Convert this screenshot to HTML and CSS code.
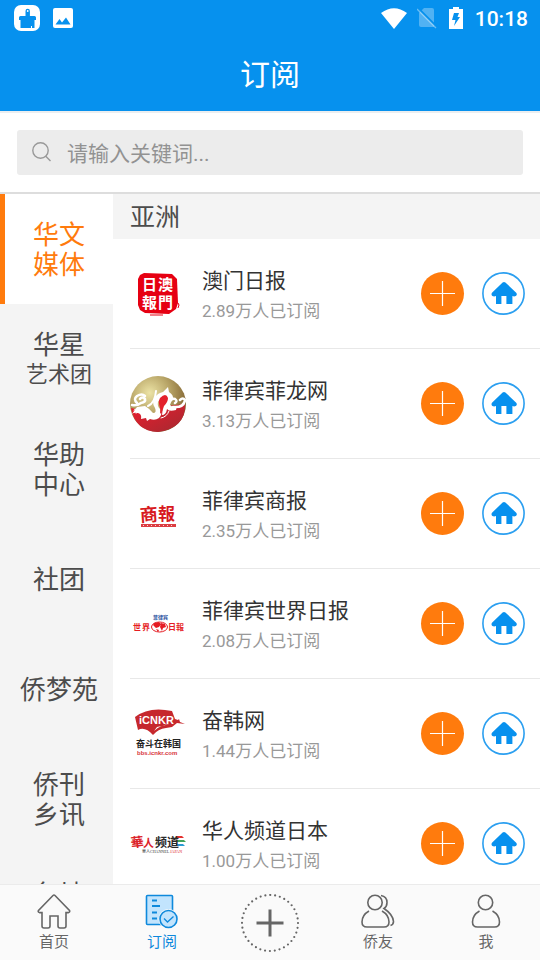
FILE: index.html
```html
<!DOCTYPE html>
<html lang="zh-CN">
<head>
    <meta charset="utf-8">
    <meta name="viewport" content="width=device-width, initial-scale=1">
    <title>订阅</title>
    <link rel="stylesheet" href="styles.css">
</head>
<body>
    <!-- Shared icons -->
    <svg class="icon-defs" aria-hidden="true">
        <symbol id="icon-plus" viewBox="0 0 43 43">
            <path d="M21.5 9v25M9 21.5h25" stroke="#fff" stroke-width="1.2" fill="none"/>
        </symbol>
        <symbol id="icon-house" viewBox="0 0 43 43">
            <circle cx="21.5" cy="21.5" r="20.6" fill="#fff" stroke="#2b9ff0" stroke-width="1.6"/>
            <path d="M20.6 10.400q1.400-1 2.800 0L34.200 20.800q1.400 2-.4 3.200-1.600.9-3.400 0V32h-6V24h-5v8h-5.400v-8q-2 .9-3.600 0-1.600-1.400-.4-3.200z" fill="#0891ee"/>
        </symbol>
    </svg>

    <header class="header">
        <div class="status-bar">
            <svg width="26" height="26" viewBox="0 0 26 26">
                <rect width="26" height="26" rx="7" fill="#fff"/>
                <path d="M11.500 11V6a2.200 2.200 0 0 1 4.400 0v5h4.600q1.500 0 1.500 1.500V15h-1.500v8H6.500v-8H5v-2.500Q5 11 6.500 11z" fill="#0691ee"/>
                <circle cx="13.700" cy="6" r=".9" fill="#fff"/>
                <path d="M17.500 21v2" stroke="#fff"/>
            </svg>
            <svg class="photo-icon" width="20" height="20" viewBox="0 0 20 20">
                <rect width="20" height="20" rx="2" fill="#fff"/>
                <path d="M2.500 16.500l4-5.500 2.500 3.500 4-5 4.500 7z" fill="#0691ee"/>
            </svg>
            <svg class="wifi-icon" width="26" height="21" viewBox="0 0 26 21">
                <path d="M0 5Q13-4.500 26 5L13 21z" fill="#fff"/>
            </svg>
            <svg width="20" height="22" viewBox="0 0 20 22">
                <path d="M7 1h8q2 0 2 2v17H4q-2 0-2-2V6z" fill="#fff" opacity=".3"/>
                <path d="M1 1l18 18" stroke="#0691ee" stroke-width="2"/>
                <path d="M0 2l19 19" stroke="#fff" stroke-width="1.300" opacity=".4"/>
            </svg>
            <svg width="14" height="22" viewBox="0 0 14 22">
                <path d="M0 2h4V0h6v2h4v20H0z" fill="#fff"/>
                <path d="M5 6h5L8.500 10H11l-6 9 1.500-6H3z" fill="#0691ee"/>
            </svg>
            <span class="clock">10:18</span>
        </div>
        <h1 class="title">订阅</h1>
    </header>

    <form class="search">
        <label class="search-box">
            <svg width="20" height="22" viewBox="0 0 20 22" fill="none" stroke="#999" stroke-width="1.400">
                <circle cx="8.500" cy="8.500" r="7.700"/>
                <path d="M13.500 14l5 5"/>
            </svg>
            <input class="search-input" type="text" placeholder="请输入关键词..." aria-label="搜索">
        </label>
    </form>

    <main class="content">
        <nav class="categories">
            <a class="category active" href="#"><span>华文</span><span>媒体</span></a>
            <a class="category" href="#"><span>华星</span><span class="small">艺术团</span></a>
            <a class="category" href="#"><span>华助</span><span>中心</span></a>
            <a class="category" href="#"><span>社团</span></a>
            <a class="category" href="#"><span>侨梦苑</span></a>
            <a class="category" href="#"><span>侨刊</span><span>乡讯</span></a>
            <a class="category" href="#"><span>各地</span><span>侨联</span></a>
        </nav>

        <section class="media">
            <h2 class="region">亚洲</h2>
            <ul class="media-list">
                <li class="media-item">
                    <svg class="logo" viewBox="0 0 56 56">
                        <path d="M8 13l2-4 4-2 28 1 5 5 1 24-2 6-7 5-24-1-5-3-2-5z" fill="#e60012"/>
                        <path d="M48 37l1 2-1 3M20 49h13" stroke="#e60012" fill="none"/>
                        <g class="brush" font-size="15" fill="#fff">
                            <text x="12" y="24">日</text>
                            <text x="28" y="24">澳</text>
                            <text x="12" y="42">報</text>
                            <text x="28" y="42">門</text>
                        </g>
                    </svg>
                    <div class="info">
                        <h3 class="name">澳门日报</h3>
                        <p class="count">2.89万人已订阅</p>
                    </div>
                    <button class="round-button add" type="button" aria-label="订阅"><svg><use href="#icon-plus"/></svg></button>
                    <a class="round-button" href="#" aria-label="主页"><svg><use href="#icon-house"/></svg></a>
                </li>
                <li class="media-item">
                    <svg class="logo" viewBox="0 0 56 56">
                        <defs>
                            <radialGradient id="gold" cx=".35" cy=".3" r=".7">
                                <stop offset="0" stop-color="#ece3a5"/>
                                <stop offset=".5" stop-color="#b9a668"/>
                                <stop offset="1" stop-color="#80622f"/>
                            </radialGradient>
                            <linearGradient id="ruby" x2="1" y2="1">
                                <stop offset="0" stop-color="#ed1c2e"/>
                                <stop offset="1" stop-color="#a32a31"/>
                            </linearGradient>
                        </defs>
                        <circle cx="28" cy="28" r="28" fill="url(#gold)"/>
                        <path d="M1 32q7 2 12 0l12 9 12-11 18-2q1 24-27 28Q5 55 1 32z" fill="url(#ruby)"/>
                        <!-- dragon body -->
                        <path d="M38 11l1 5q5 3 4 8-4-1-4 4 3 4 8 2l-1 4q-7 2-9-1-1 6-5 6 1-7 0-11-2-6-4-2-1 4 2 7 3 5-1 9-4 3-9 1l-3 2-1-3-5 1q1-5-3-6-4-1-6 1l5-7 8-1q5 3 8 7 4 0 2-5-4-6 0-11 3-4 8-5z" fill="#fff"/>
                        <path d="M30 22q6-6 8 0 0 4-4 8-1 5-4 8 1-5-1-10-1-3 1-6z" fill="#e3212c"/>
                        <!-- clouds -->
                        <g fill="none" stroke="#fff" stroke-linecap="round">
                            <path d="M2 29q5 1 9-2 5-1 4-4-3-3-5 0M7 27q-4-4 0-7 5-3 8 0" stroke-width="2.500"/>
                            <path d="M18 30q7-3 8-15" stroke-width="2"/>
                            <path d="M39 28q2-6 6-5 3 2 0 4M43 31q11 1 12-7-2-3-5 0" stroke-width="2.500"/>
                            <path d="M4 34q2-2 5-1M6 37q3-2 5-1M31 42q6-1 8-7"/>
                        </g>
                    </svg>
                    <div class="info">
                        <h3 class="name">菲律宾菲龙网</h3>
                        <p class="count">3.13万人已订阅</p>
                    </div>
                    <button class="round-button add" type="button" aria-label="订阅"><svg><use href="#icon-plus"/></svg></button>
                    <a class="round-button" href="#" aria-label="主页"><svg><use href="#icon-house"/></svg></a>
                </li>
                <li class="media-item">
                    <svg class="logo" viewBox="0 0 56 56">
                        <g class="brush" fill="#d71920">
                            <text x="10" y="35" font-size="18" transform="rotate(-4 20 30)">商</text>
                            <text x="28" y="34" font-size="17">報</text>
                        </g>
                        <path d="M11 38h35v3H11z" fill="#dc3d42"/>
                        <path d="M13 39.500h32" stroke="#f8d6d6" stroke-dasharray="1 3"/>
                    </svg>
                    <div class="info">
                        <h3 class="name">菲律宾商报</h3>
                        <p class="count">2.35万人已订阅</p>
                    </div>
                    <button class="round-button add" type="button" aria-label="订阅"><svg><use href="#icon-plus"/></svg></button>
                    <a class="round-button" href="#" aria-label="主页"><svg><use href="#icon-house"/></svg></a>
                </li>
                <li class="media-item">
                    <svg class="logo" viewBox="0 0 56 56">
                        <g class="brush" fill="#e51c23">
                            <text x="3" y="34" font-size="8">世</text>
                            <text x="12" y="34" font-size="8">界</text>
                            <text x="38" y="34" font-size="8">日</text>
                            <text x="46" y="34" font-size="8">報</text>
                            <text x="23" y="23" font-size="5" fill="#244b9b">菲律宾</text>
                        </g>
                        <ellipse cx="29.500" cy="31" rx="8" ry="5" fill="#fff" stroke="#e51c23"/>
                        <path d="M24 27l5-1 2 2-2 3-3 1-3-3zM31 27l4 1 1 3-3 1-1 3-2-4zM26 33l3 1-1 2z" fill="#e51c23"/>
                    </svg>
                    <div class="info">
                        <h3 class="name">菲律宾世界日报</h3>
                        <p class="count">2.08万人已订阅</p>
                    </div>
                    <button class="round-button add" type="button" aria-label="订阅"><svg><use href="#icon-plus"/></svg></button>
                    <a class="round-button" href="#" aria-label="主页"><svg><use href="#icon-house"/></svg></a>
                </li>
                <li class="media-item">
                    <svg class="logo" viewBox="0 0 56 56">
                        <path d="M5 11q14-11 37-6l3 8 3 1 1-1 1 3 5 2-8-1-5 4-6 1q-8 1-13 7Q15 20 8 24z" fill="#c6282d"/>
                        <path d="M24 25q6-6 16-7l-13 3z" fill="#fff"/>
                        <text class="sans" x="9" y="18" font-size="11" fill="#fff">iCNKR</text>
                        <text class="brush" x="6" y="41" font-size="9" fill="#222">奋斗在韩国</text>
                        <text class="sans" x="7" y="49" font-size="6" fill="#d7353c">bbs.icnkr.com</text>
                    </svg>
                    <div class="info">
                        <h3 class="name">奋韩网</h3>
                        <p class="count">1.44万人已订阅</p>
                    </div>
                    <button class="round-button add" type="button" aria-label="订阅"><svg><use href="#icon-plus"/></svg></button>
                    <a class="round-button" href="#" aria-label="主页"><svg><use href="#icon-house"/></svg></a>
                </li>
                <li class="media-item">
                    <svg class="logo" viewBox="0 0 56 56">
                        <path d="M46 20h6l2 2h-8z" fill="#e4312f"/>
                        <path d="M47 24h7l2 2h-9z" fill="#41a35a"/>
                        <path d="M46 28h7l2 2h-9z" fill="#2a9bd2"/>
                        <g class="brush">
                            <text x="1" y="31" font-size="13" fill="#dc2229" transform="rotate(-6 6 28)">華</text>
                            <text x="13" y="31" font-size="11" fill="#dc2229">人</text>
                            <text x="25" y="31" font-size="12" fill="#292929">频道</text>
                        </g>
                        <text class="serif" x="12" y="37" font-size="4" fill="#333">華人CHANNEL <tspan fill="#dc2229">JAPAN</tspan></text>
                    </svg>
                    <div class="info">
                        <h3 class="name">华人频道日本</h3>
                        <p class="count">1.00万人已订阅</p>
                    </div>
                    <button class="round-button add" type="button" aria-label="订阅"><svg><use href="#icon-plus"/></svg></button>
                    <a class="round-button" href="#" aria-label="主页"><svg><use href="#icon-house"/></svg></a>
                </li>
            </ul>
        </section>
    </main>

    <nav class="tab-bar">
        <a class="tab" href="#">
            <svg width="34" height="36" viewBox="0 0 34 36">
                <path d="M16 1.500q1-1 2 0L32.500 16.500q.8 1.500-1 2.100H29V32q0 2-2 2h-4q-2 0-2-2V22h-8v10q0 2-2 2H7q-2 0-2-2V18.600H2.500q-2-.6-1-2.100z"/>
            </svg>
            首页
        </a>
        <a class="tab active" href="#">
            <svg width="34" height="36" viewBox="0 0 34 36">
                <rect x="1.500" y="1.500" width="26" height="29" rx="1" fill="#c2e4fd"/>
                <path d="M7 6.500h5M7 12h8M7 18.500h5M7 24.500h5" stroke-width="2"/>
                <circle cx="23.500" cy="25" r="10" fill="#fafafa" stroke="none"/>
                <circle cx="23.500" cy="25" r="8.500" fill="#c2e4fd"/>
                <path d="M19 24.500l3.500 3.500 6-5.500" stroke-width="1.300"/>
            </svg>
            订阅
        </a>
        <button class="tab" type="button" aria-label="发布">
            <svg width="60" height="60" viewBox="0 0 60 60">
                <circle cx="30" cy="29" r="28" stroke-width="2.200" stroke-linecap="round" stroke-dasharray="0 4.888"/>
                <path d="M30 15.500v27M16.500 29h27" stroke-width="3"/>
            </svg>
        </button>
        <a class="tab" href="#">
            <svg width="34" height="36" viewBox="0 0 34 36">
                <circle cx="14" cy="8.500" r="7.200"/>
                <path d="M8 17Q1 21 1 28q0 5 5 5h17q5 0 5-5 0-7-7-11M20 1.500q6 1 6 7 0 4-3 6 9 6 9.500 13 0 3-3 4"/>
            </svg>
            侨友
        </a>
        <a class="tab" href="#">
            <svg width="34" height="36" viewBox="0 0 34 36">
                <circle cx="16.500" cy="8.500" r="7.200"/>
                <path d="M10.500 17Q3.500 21 3.500 28q0 5 5 5h17q5 0 5-5 0-7-7-11"/>
            </svg>
            我
        </a>
    </nav>
</body>
</html>
```
FILE: styles.css
```css
* {
    box-sizing: border-box;
}

body {
    display: flex;
    flex-direction: column;
    height: 100vh;
    margin: 0;
    background-color: #fff;
    color: #333;
    font-family: Roboto, "Noto Sans CJK SC", sans-serif;
}

h1, h2, h3, p, ul {
    margin: 0;
    padding: 0;
    font-weight: normal;
}

a {
    color: inherit;
    text-decoration: none;
}

svg {
    display: block;
    flex-shrink: 0;
}

.icon-defs {
    position: absolute;
    width: 0;
    height: 0;
}

/* Header */
.header {
    flex-shrink: 0;
    background-color: #0691ee;
    border-bottom: 2px solid #ebeef0;
    color: #fff;
}

.status-bar {
    display: flex;
    align-items: center;
    gap: 12px;
    height: 36px;
    padding: 0 12px 0 14px;
}

.photo-icon {
    margin-left: 1px;
}

.wifi-icon {
    margin-left: auto;
    margin-right: -2px;
}

.clock {
    padding-top: 2px;
    font-size: 21px;
    font-weight: 500;
}

.title {
    height: 75px;
    font-size: 30px;
    line-height: 78px;
    text-align: center;
}

/* Search */
.search {
    flex-shrink: 0;
    padding: 17px;
    border-bottom: 2px solid #ddd;
}

.search-box {
    display: flex;
    align-items: center;
    gap: 15px;
    height: 45px;
    padding: 0 15px;
    border-radius: 3px;
    background-color: #ececec;
}

.search-input {
    flex: 1;
    min-width: 0;
    padding: 2px 0 0;
    border: none;
    outline: none;
    background: none;
    color: #333;
    font-family: inherit;
    font-size: 21px;
}

.search-input::placeholder {
    color: #929292;
}

/* Categories on the left, list on the right */
.content {
    display: flex;
    flex: 1;
    min-height: 0;
}

.categories,
.media {
    overflow-y: auto;
    scrollbar-width: none;
}

.categories {
    flex: 0 0 113px;
    background-color: #f4f4f4;
}

.category {
    display: flex;
    flex-direction: column;
    align-items: center;
    justify-content: center;
    height: 110px;
    padding-top: 2px;
    border-left: 5px solid transparent;
    color: #4c4c4c;
    font-size: 26px;
    line-height: 30px;
}

.category .small {
    font-size: 22px;
}

.category.active {
    border-left-color: #ff7b0d;
    background-color: #fff;
    color: #ff7b0d;
}

.media {
    flex: 1;
    min-width: 0;
}

.region {
    padding: 2px 0 0 17px;
    background-color: #f4f4f4;
    color: #4c4c4c;
    font-size: 25px;
    line-height: 43px;
}

.media-list {
    list-style: none;
}

.media-item {
    display: flex;
    align-items: center;
    height: 110px;
    margin-left: 17px;
    padding-right: 15px;
    border-bottom: 1px solid #e8e8e8;
}

.logo {
    width: 56px;
    height: 56px;
}

.brush {
    font-family: "Noto Sans CJK SC", sans-serif;
    font-weight: bold;
}

.sans {
    font-family: "Liberation Sans", sans-serif;
    font-weight: bold;
}

.serif {
    font-family: "Liberation Serif", "Noto Sans CJK SC", serif;
}

.info {
    flex: 1;
    min-width: 0;
    padding: 4px 0 0 16px;
    line-height: 30px;
}

.name {
    font-size: 21px;
}

.count {
    color: #999;
    font-size: 17px;
}

.round-button {
    flex-shrink: 0;
    width: 43px;
    height: 43px;
    margin-left: 18px;
    padding: 0;
    border: none;
    border-radius: 50%;
    cursor: pointer;
}

.round-button svg {
    width: 43px;
    height: 43px;
}

.add {
    background-color: #ff7b0d;
}

/* Bottom tabs */
.tab-bar {
    display: flex;
    flex-shrink: 0;
    height: 76px;
    border-top: 1px solid #ebebeb;
    background-color: #fafafa;
}

.tab {
    display: flex;
    flex: 1;
    flex-direction: column;
    align-items: center;
    justify-content: center;
    gap: 1px;
    padding: 2px 0 0;
    border: none;
    background: none;
    color: #666;
    font-family: inherit;
    font-size: 15px;
    line-height: 22px;
}

.tab svg {
    fill: none;
    stroke: currentColor;
    stroke-width: 1.6;
}

.tab.active {
    color: #0e89dc;
}
```
